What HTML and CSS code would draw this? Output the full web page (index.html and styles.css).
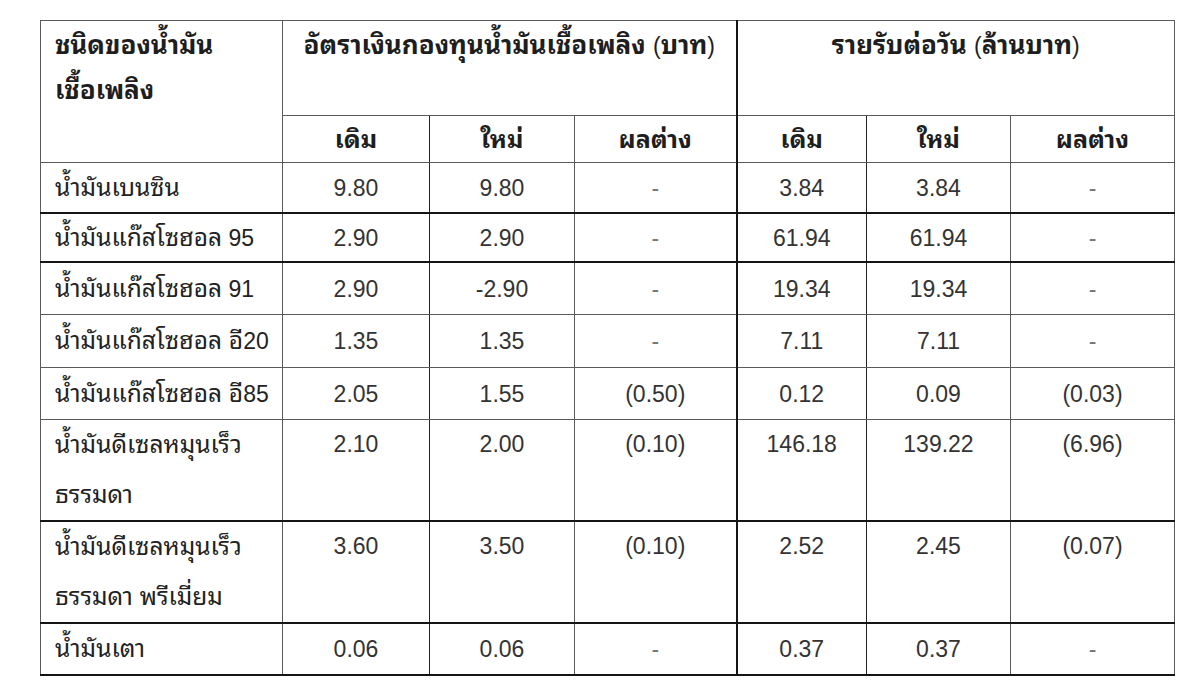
FILE: index.html
```html
<!DOCTYPE html>
<html lang="th">
<head>
<meta charset="utf-8">
<title>อัตราเงินกองทุนน้ำมันเชื้อเพลิง</title>
<link rel="stylesheet" href="styles.css">
</head>
<body>
<table class="fund">
  <colgroup>
    <col class="c-name">
    <col class="c-a1"><col class="c-a2"><col class="c-a3">
    <col class="c-b1"><col class="c-b2"><col class="c-b3">
  </colgroup>
  <thead>
    <tr class="h1">
      <th rowspan="2" class="name-h">ชนิดของน้ำมัน<br>เชื้อเพลิง</th>
      <th colspan="3" class="grp sep-r">อัตราเงินกองทุนน้ำมันเชื้อเพลิง <span class="par">(</span>บาท<span class="par">)</span></th>
      <th colspan="3" class="grp">รายรับต่อวัน <span class="par">(</span>ล้านบาท<span class="par">)</span></th>
    </tr>
    <tr class="h2">
      <th class="sep-r2">เดิม</th><th>ใหม่</th><th class="sep-r">ผลต่าง</th>
      <th class="sep-r2">เดิม</th><th>ใหม่</th><th>ผลต่าง</th>
    </tr>
  </thead>
  <tbody>
    <tr class="thick ra">
      <td class="name"><span class="th">น้ำมันเบนซิน</span></td>
      <td class="sep-r2">9.80</td><td>9.80</td><td class="sep-r dash">-</td>
      <td class="sep-r2">3.84</td><td>3.84</td><td class="dash">-</td>
    </tr>
    <tr class="thick rb">
      <td class="name"><span class="th">น้ำมันแก๊สโซฮอล</span> 95</td>
      <td class="sep-r2">2.90</td><td>2.90</td><td class="sep-r dash">-</td>
      <td class="sep-r2">61.94</td><td>61.94</td><td class="dash">-</td>
    </tr>
    <tr>
      <td class="name"><span class="th">น้ำมันแก๊สโซฮอล</span> 91</td>
      <td class="sep-r2">2.90</td><td>-2.90</td><td class="sep-r dash">-</td>
      <td class="sep-r2">19.34</td><td>19.34</td><td class="dash">-</td>
    </tr>
    <tr class="rd">
      <td class="name"><span class="th">น้ำมันแก๊สโซฮอล อี</span>20</td>
      <td class="sep-r2">1.35</td><td>1.35</td><td class="sep-r dash">-</td>
      <td class="sep-r2">7.11</td><td>7.11</td><td class="dash">-</td>
    </tr>
    <tr>
      <td class="name"><span class="th">น้ำมันแก๊สโซฮอล อี</span>85</td>
      <td class="sep-r2">2.05</td><td>1.55</td><td class="sep-r">(0.50)</td>
      <td class="sep-r2">0.12</td><td>0.09</td><td>(0.03)</td>
    </tr>
    <tr class="thick tall">
      <td class="name"><span class="th">น้ำมันดีเซลหมุนเร็ว<br>ธรรมดา</span></td>
      <td class="sep-r2">2.10</td><td>2.00</td><td class="sep-r">(0.10)</td>
      <td class="sep-r2">146.18</td><td>139.22</td><td>(6.96)</td>
    </tr>
    <tr class="thick tall tall2">
      <td class="name"><span class="th">น้ำมันดีเซลหมุนเร็ว<br>ธรรมดา พรีเมี่ยม</span></td>
      <td class="sep-r2">3.60</td><td>3.50</td><td class="sep-r">(0.10)</td>
      <td class="sep-r2">2.52</td><td>2.45</td><td>(0.07)</td>
    </tr>
    <tr class="thick last">
      <td class="name"><span class="th">น้ำมันเตา</span></td>
      <td class="sep-r2">0.06</td><td>0.06</td><td class="sep-r dash">-</td>
      <td class="sep-r2">0.37</td><td>0.37</td><td class="dash">-</td>
    </tr>
  </tbody>
</table>
</body>
</html>
```

FILE: styles.css
```css
html, body {
  background: #ffffff;
}
body {
  margin: 0;
  padding: 20px 0 0 40px;
  font-family: "Liberation Sans", "Noto Sans Thai Looped", Tahoma, Loma, Garuda, Waree, "Tlwg Typo", "Noto Sans Thai", sans-serif;
  color: #2a2a2a;
}
.fund {
  border-collapse: collapse;
  table-layout: fixed;
  width: 1134px;
  font-size: 23px;
}
.c-name { width: 242px; }
.c-a1 { width: 147px; }
.c-a2 { width: 145px; }
.c-a3 { width: 162px; }
.c-b1 { width: 130px; }
.c-b2 { width: 144px; }
.c-b3 { width: 164px; }

.fund th, .fund td {
  border: 1px solid #5a5a5a;
  padding: 0;
  text-align: center;
  vertical-align: middle;
  line-height: 46px;
  font-weight: normal;
}
.fund th {
  font-weight: bold;
  color: #1e1e1e;
}
.fund .h1 th {
  height: 92px;
  line-height: 45px;
  padding-top: 2px;
  vertical-align: top;
  font-size: 26px;
}
.fund .h1 .par {
  font-size: 23px;
  font-weight: normal;
}
.fund .h2 th {
  height: 46px;
  line-height: 46px;
  font-size: 25px;
}
.fund .name-h {
  text-align: left;
  padding-left: 14px;
}
.fund .name {
  text-align: left;
  padding-left: 14px;
  color: #222;
}
.fund .th {
  font-size: 24.5px;
}
.fund td {
  color: #333;
  height: 51px;
}
.fund .ra td {
  height: 49px;
}
.fund .rb td {
  height: 47px;
}
.fund .rd td {
  height: 52px;
}
.fund .last td {
  height: 50px;
}
.fund .tall td {
  height: 98px;
  line-height: 49px;
  vertical-align: top;
}
.fund .tall2 td {
  height: 100px;
}
.fund .thick td {
  border-bottom: 2px solid #151515;
}
.fund .sep-r {
  border-right: 2px solid #151515;
}
.fund .sep-r2 {
  border-right: 1px solid #222;
}
.fund .dash {
  color: #777;
}
```
